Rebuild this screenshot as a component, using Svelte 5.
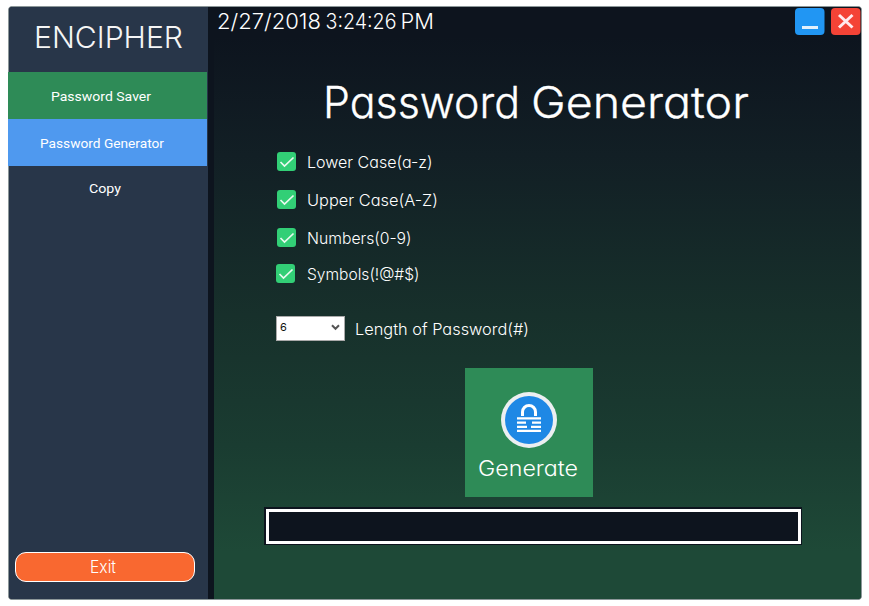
<script>
  const options = [
    { label: 'Lower Case(a-z)', width: 125.5 },
    { label: 'Upper Case(A-Z)', width: 131 },
    { label: 'Numbers(0-9)', width: 104.5 },
    { label: 'Symbols(!@#$)', width: 112.5 }
  ];

  // Headings set word by word: [text, start, width]
  const title = [['Password', -2, 197], ['Generator', 206, 218]];
  const clock = [['2/27/2018', -1, 104], ['3:24:26', 107.5, 71], ['PM', 182.5, 33.5]];
</script>

{#snippet fitted(text, width, size, height, baseline)}
  <svg class="fitted" {width} {height} style:font-size="{size}px">
    <text x="0" y={baseline} textLength={width} lengthAdjust="spacingAndGlyphs">{text}</text>
  </svg>
{/snippet}

{#snippet words(parts, width, size, height, baseline)}
  <svg class="fitted" {width} {height} style:font-size="{size}px">
    {#each parts as [text, x, length]}
      <text {x} y={baseline} textLength={length} lengthAdjust="spacingAndGlyphs">{text}</text>
    {/each}
  </svg>
{/snippet}

<div class="window">
  <aside>
    <div class="brand">{@render fitted('ENCIPHER', 149, 30, 40, 28.5)}</div>
    <button class="nav saver">{@render fitted('Password Saver', 100, 13.5, 20, 15)}</button>
    <button class="nav generator">{@render fitted('Password Generator', 124, 13.5, 20, 15)}</button>
    <button class="nav copy">{@render fitted('Copy', 32, 13.5, 20, 15)}</button>
    <button class="exit">{@render fitted('Exit', 26, 17, 24, 18)}</button>
  </aside>
  <div class="divider"></div>
  <main>
    <header>
      <div class="clock">{@render words(clock, 215, 21, 28, 22)}</div>
      <div class="controls">
        <svg width="30" height="28"><rect x="0" y="1" width="29.5" height="27" rx="4" fill="#2196f3" /><rect x="7" y="19" width="16" height="3" fill="#e4f1fc" /></svg>
        <svg width="30" height="28"><rect x="0" y="1" width="29.5" height="27" rx="4" fill="#f44336" /><path d="M8 8 21.5 20.5M21.5 8 8 20.5" stroke="#ffebee" stroke-width="3" /></svg>
      </div>
    </header>
    <h1>{@render words(title, 423, 43, 54, 42)}</h1>
    <ul>
      {#each options as option}
        <li>
          <svg width="19" height="19" viewBox="0 0 19 19"><rect width="19" height="19" rx="3" fill="#32cf76" /><path d="m3.5 10 4 4L16.5 5.5" fill="none" stroke="#eafaf0" stroke-width="1.7" /></svg>
          {@render fitted(option.label, option.width, 16.3, 24, 18.5)}
        </li>
      {/each}
    </ul>
    <div class="length">
      <div class="select"><span>6</span><svg width="9" height="7"><path d="m1 1.2 3.5 3.6L8 1.2" fill="none" stroke="#555" stroke-width="2" /></svg></div>
      {@render fitted('Length of Password(#)', 174, 16.3, 24, 18.5)}
    </div>
    <button class="generate">
      <svg width="56" height="56" viewBox="0 0 56 56">
        <circle cx="28" cy="28" r="28" fill="#eceff1" />
        <circle cx="28" cy="28" r="24" fill="#1e88e5" />
        <path d="M21.5 24V20a6.5 6.5 0 0 1 13 0v4" fill="none" stroke="#fff" stroke-width="3" />
        <path d="M16 26.3h24M16 30.7h9m6 0h9M16 34.8h10m4 0h10M16 38.8h24" stroke="#fff" stroke-width="2.3" />
      </svg>
      <span class="caption">{@render fitted('Generate', 100, 21, 30, 22)}</span>
    </button>
    <div class="output"></div>
  </main>
</div>

<style>
  :global(body) { background: #fff; }
  .window {
    box-sizing: border-box;
    display: flex;
    width: 854px;
    height: 594px;
    margin: 6px 0 0 8px;
    border: 1px solid #8c9799;
    border-radius: 4px;
    background: #0d141e;
    color: #fff;
    font-family: Inter, 'Liberation Sans', sans-serif;
  }
  .fitted {
    display: block;
    flex: none;
    overflow: visible;
    fill: currentColor;
    font-weight: 300;
    font-feature-settings: 'cv11' 1;
  }
  button { display: flex; padding: 0; border: 0; color: #fff; font-family: inherit; }
  aside {
    display: flex;
    flex-direction: column;
    width: 199px;
    border-radius: 3px 0 0 3px;
    background: #283649;
  }
  .brand { height: 53px; padding: 12px 0 0 25px; color: #f5f5f5; }
  .nav {
    align-items: center;
    justify-content: center;
    width: 199px;
    height: 47px;
    margin-left: -1px;
    padding-right: 13px;
    background: transparent;
  }
  .nav .fitted { font-family: Roboto, 'Liberation Sans', sans-serif; font-weight: 400; }
  .nav.saver { background: #2e8b57; }
  .nav.generator { background: #4f99ef; padding-right: 11px; }
  .nav.copy { height: 44px; padding-right: 5px; }
  .exit {
    box-sizing: border-box;
    align-items: center;
    justify-content: center;
    width: 180px;
    height: 30px;
    margin: auto 0 17px 6px;
    padding-right: 4px;
    border: 1px solid #fff;
    border-radius: 11px;
    background: #f96830;
  }
  .divider { width: 6px; background: #0d141e; }
  main {
    display: flex;
    flex-direction: column;
    width: 647px;
    background: linear-gradient(#0d141e 5%, #121f25 25%, #17302b 52%, #1a3c31 74%, #1e4937 92%);
    border-radius: 0 3px 3px 0;
  }
  header { display: flex; height: 66px; padding-left: 4px; }
  .clock { flex: 1; }
  .controls { display: flex; gap: 6px; }
  h1 { height: 54px; margin: 3px 0 0 111px; font-weight: 300; }
  h1 .fitted { stroke: currentColor; stroke-width: 0.3px; }
  ul { margin: 12px 0 0 63px; padding: 0; list-style: none; }
  li { display: flex; gap: 11px; align-items: center; height: 38px; }
  li:last-child { gap: 12px; height: 34px; margin-left: -1px; }
  .length { display: flex; gap: 10px; align-items: center; height: 26px; margin: 25px 0 0 62px; }
  .select {
    box-sizing: border-box;
    display: flex;
    align-items: center;
    justify-content: space-between;
    width: 69px;
    height: 25px;
    padding: 0 4px 2px 3px;
    border: 1px solid #aaa;
    background: #fff;
    color: #111;
    font-size: 11px;
  }
  .generate {
    box-sizing: border-box;
    flex-direction: column;
    align-items: center;
    gap: 6px;
    width: 128px;
    height: 129px;
    margin: 27px 0 0 251px;
    padding-top: 24px;
    background: #2e8b57;
  }
  .caption { padding-right: 3px; }
  .output {
    box-sizing: border-box;
    width: 538px;
    height: 38px;
    margin: 10px 0 0 50px;
    padding: 2px 1px 1px 2px;
    background: #0d141e;
  }
  .output::before {
    content: '';
    box-sizing: border-box;
    display: block;
    height: 100%;
    border: 3px solid #fff;
  }
</style>
